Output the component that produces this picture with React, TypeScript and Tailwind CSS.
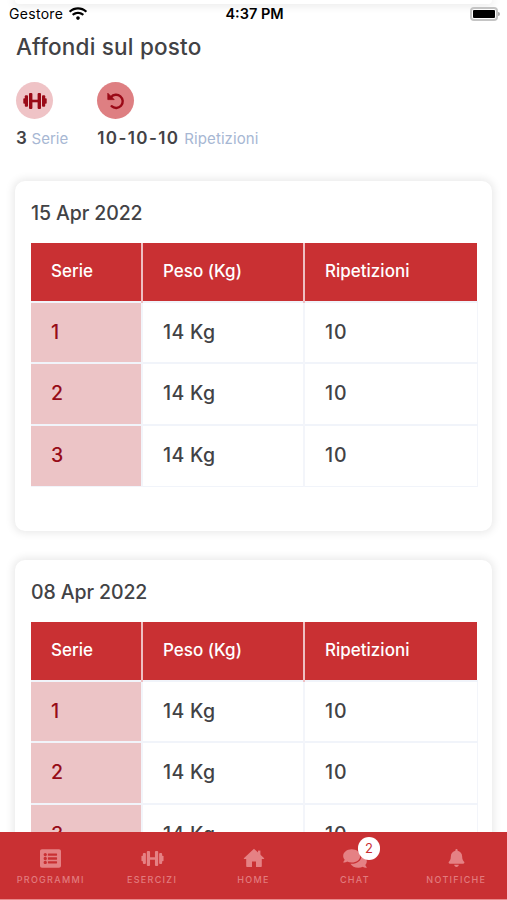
import React from 'react';
import { FaBell, FaComments, FaListAlt, FaWifi } from 'react-icons/fa';

interface Session {
    date: string;
    rows: { serie: number; peso: string; reps: number }[];
}

const rows = [
    { serie: 1, peso: '14 Kg', reps: 10 },
    { serie: 2, peso: '14 Kg', reps: 10 },
    { serie: 3, peso: '14 Kg', reps: 10 },
];

const sessions: Session[] = [
    { date: '15 Apr 2022', rows },
    { date: '08 Apr 2022', rows },
];

const DumbbellIcon: React.FC<{ className?: string }> = ({ className }) => (
    <svg viewBox="0 0 24 18" fill="currentColor" className={className}>
        <rect x="0.3" y="6.2" width="2" height="5.6" rx="0.8" />
        <rect x="1.8" y="3.2" width="3.2" height="11.6" rx="1" />
        <rect x="6" y="1" width="3.4" height="16" rx="1" />
        <rect x="9" y="7.7" width="6" height="2.6" />
        <rect x="14.6" y="1" width="3.4" height="16" rx="1" />
        <rect x="19" y="3.2" width="3.2" height="11.6" rx="1" />
        <rect x="21.7" y="6.2" width="2" height="5.6" rx="0.8" />
    </svg>
);

const UndoIcon: React.FC = () => (
    <svg viewBox="0 0 18 18" className="w-[18px] h-[18px]" fill="none">
        <path d="M4 5.2A6.6 6.6 0 1 1 4.6 14.2" stroke="currentColor" strokeWidth="2.4" strokeLinecap="round" />
        <path d="M0.8 1.2V7.6H7.2Z" fill="currentColor" stroke="currentColor" strokeWidth="0.8" strokeLinejoin="round" />
    </svg>
);

const HomeIcon: React.FC = () => (
    <svg viewBox="0 0 22 20" fill="currentColor" className="w-[22px] h-5">
        <path d="M11 0.8L21.2 10.2Q21.5 11 20.6 11H18.8V18.2Q18.8 19 18 19H13V13.6H9V19H4Q3.2 19 3.2 18.2V11H1.4Q0.5 11 0.8 10.2Z" />
        <rect x="15" y="2.6" width="2.4" height="5" />
    </svg>
);

const StatusBar: React.FC = () => (
    <header className="h-7 shrink-0 flex flex-col text-black">
        {/* bottom edge of the card that has scrolled under the status bar */}
        <div className="h-1 mx-[15px] shrink-0 rounded-b-[10px] bg-white shadow-[0_0_9px_2px_rgba(0,0,0,0.09)]" />
        <div className="h-[19px] flex items-center justify-between pl-[9px] pr-[7px]">
            <div className="flex-1 flex items-center gap-1.5">
                <span className="text-[14px] tracking-[0.3px]">Gestore</span>
                <FaWifi className="w-[18px] h-[15px]" />
            </div>
            <span className="text-[14.5px] font-semibold">4:37 PM</span>
            <div className="flex-1 flex items-center justify-end">
                <span className="w-[28px] h-[14px] rounded-[4px] border-2 border-[#c4c4c4] p-px">
                    <span className="block w-full h-full rounded-[1px] bg-black" />
                </span>
                <span className="w-[2px] h-1 rounded-r bg-[#aaa]" />
            </div>
        </div>
    </header>
);

const SessionCard: React.FC<{ session: Session }> = ({ session }) => (
    <section className="h-[350px] shrink-0 rounded-[10px] bg-white px-4 pt-[19px] shadow-[0_0_9px_2px_rgba(0,0,0,0.09)]">
        <h2 className="text-[19.5px] leading-[26px] font-medium tracking-[-0.1px] mb-[17px]">{session.date}</h2>
        <table className="w-[446px] table-fixed border-collapse">
            <colgroup>
                <col className="w-[111px]" />
                <col className="w-[162px]" />
                <col className="w-[173px]" />
            </colgroup>
            <thead>
                <tr className="h-[58.5px] bg-[#c93033] text-white text-left text-[17px]">
                    <th className="pl-5 font-medium">Serie</th>
                    <th className="pl-5 font-medium border-l-2 border-[#efbfc2]">Peso (Kg)</th>
                    <th className="pl-5 font-medium border-l-2 border-[#efbfc2]">Ripetizioni</th>
                </tr>
            </thead>
            <tbody className="text-[19.5px] font-medium">
                {session.rows.map((row) => (
                    <tr key={row.serie} className="h-[61.7px] border-t-2 border-b border-[#f1f4fa]">
                        <td className="pl-5 bg-[#ecc4c6] text-[#960c18]">{row.serie}</td>
                        <td className="pl-5 tracking-[0.3px] border-l-2 border-[#f3f5fa]">{row.peso}</td>
                        <td className="pl-5 tracking-[1px] border-l-2 border-r border-[#f3f5fa]">{row.reps}</td>
                    </tr>
                ))}
            </tbody>
        </table>
    </section>
);

interface TabProps {
    label: string;
    icon: React.ReactNode;
    badge?: number;
}

const Tab: React.FC<TabProps> = ({ label, icon, badge }) => (
    <div className="flex-1 flex flex-col items-center">
        <div className="relative h-6 flex items-center text-[#e58184]">
            {icon}
            {badge && (
                <span className="absolute left-[15px] -top-[9px] w-[22px] h-[23px] rounded-full bg-white text-[#c93033] text-[13px] flex items-center justify-center">
                    {badge}
                </span>
            )}
        </div>
        <span className="mt-[3px] text-[9px] leading-[14px] font-medium tracking-[1.3px] text-[#e27b7e]">{label}</span>
    </div>
);

export default function App() {
    return (
        <div className="w-[507px] h-[900px] overflow-hidden flex flex-col bg-white text-[#424245] font-['Inter',sans-serif]">
            <StatusBar />
            <main className="flex-1 min-h-0 overflow-hidden px-[15px]">
                <h1 className="mt-1 pl-px text-[22.5px] leading-[30px] font-medium tracking-[0.2px]">Affondi sul posto</h1>
                <div className="mt-5 pl-px flex gap-[29px] text-[17px]">
                    <div>
                        <div className="w-[37px] h-[37px] rounded-full bg-[#efc3c6] text-[#9a0a17] flex items-center justify-center">
                            <DumbbellIcon className="w-6 h-[18px]" />
                        </div>
                        <p className="mt-[7px] leading-6 whitespace-nowrap">
                            <span className="font-semibold">3</span> <span className="text-[15px] text-[#a7b7d3]">Serie</span>
                        </p>
                    </div>
                    <div>
                        <div className="w-[37px] h-[37px] rounded-full bg-[#de7f82] text-[#9a0a17] flex items-center justify-center">
                            <UndoIcon />
                        </div>
                        <p className="mt-[7px] leading-6 whitespace-nowrap">
                            <span className="font-semibold tracking-[1.4px]">10-10-10</span> <span className="text-[15px] tracking-[0.1px] text-[#a7b7d3]">Ripetizioni</span>
                        </p>
                    </div>
                </div>
                <div className="mt-[30px] flex flex-col gap-[29px]">
                    {sessions.map((session) => (
                        <SessionCard key={session.date} session={session} />
                    ))}
                </div>
            </main>
            <nav className="h-[68px] shrink-0 bg-[#c93033] border-b border-[#e88b8c] flex pt-[14px]">
                <Tab label="PROGRAMMI" icon={<FaListAlt className="w-[21px] h-[21px]" />} />
                <Tab label="ESERCIZI" icon={<DumbbellIcon className="w-[23px] h-[17px]" />} />
                <Tab label="HOME" icon={<HomeIcon />} />
                <Tab label="CHAT" icon={<FaComments className="w-6 h-[21px]" />} badge={2} />
                <Tab label="NOTIFICHE" icon={<FaBell className="w-[17px] h-[18px]" />} />
            </nav>
        </div>
    );
}
